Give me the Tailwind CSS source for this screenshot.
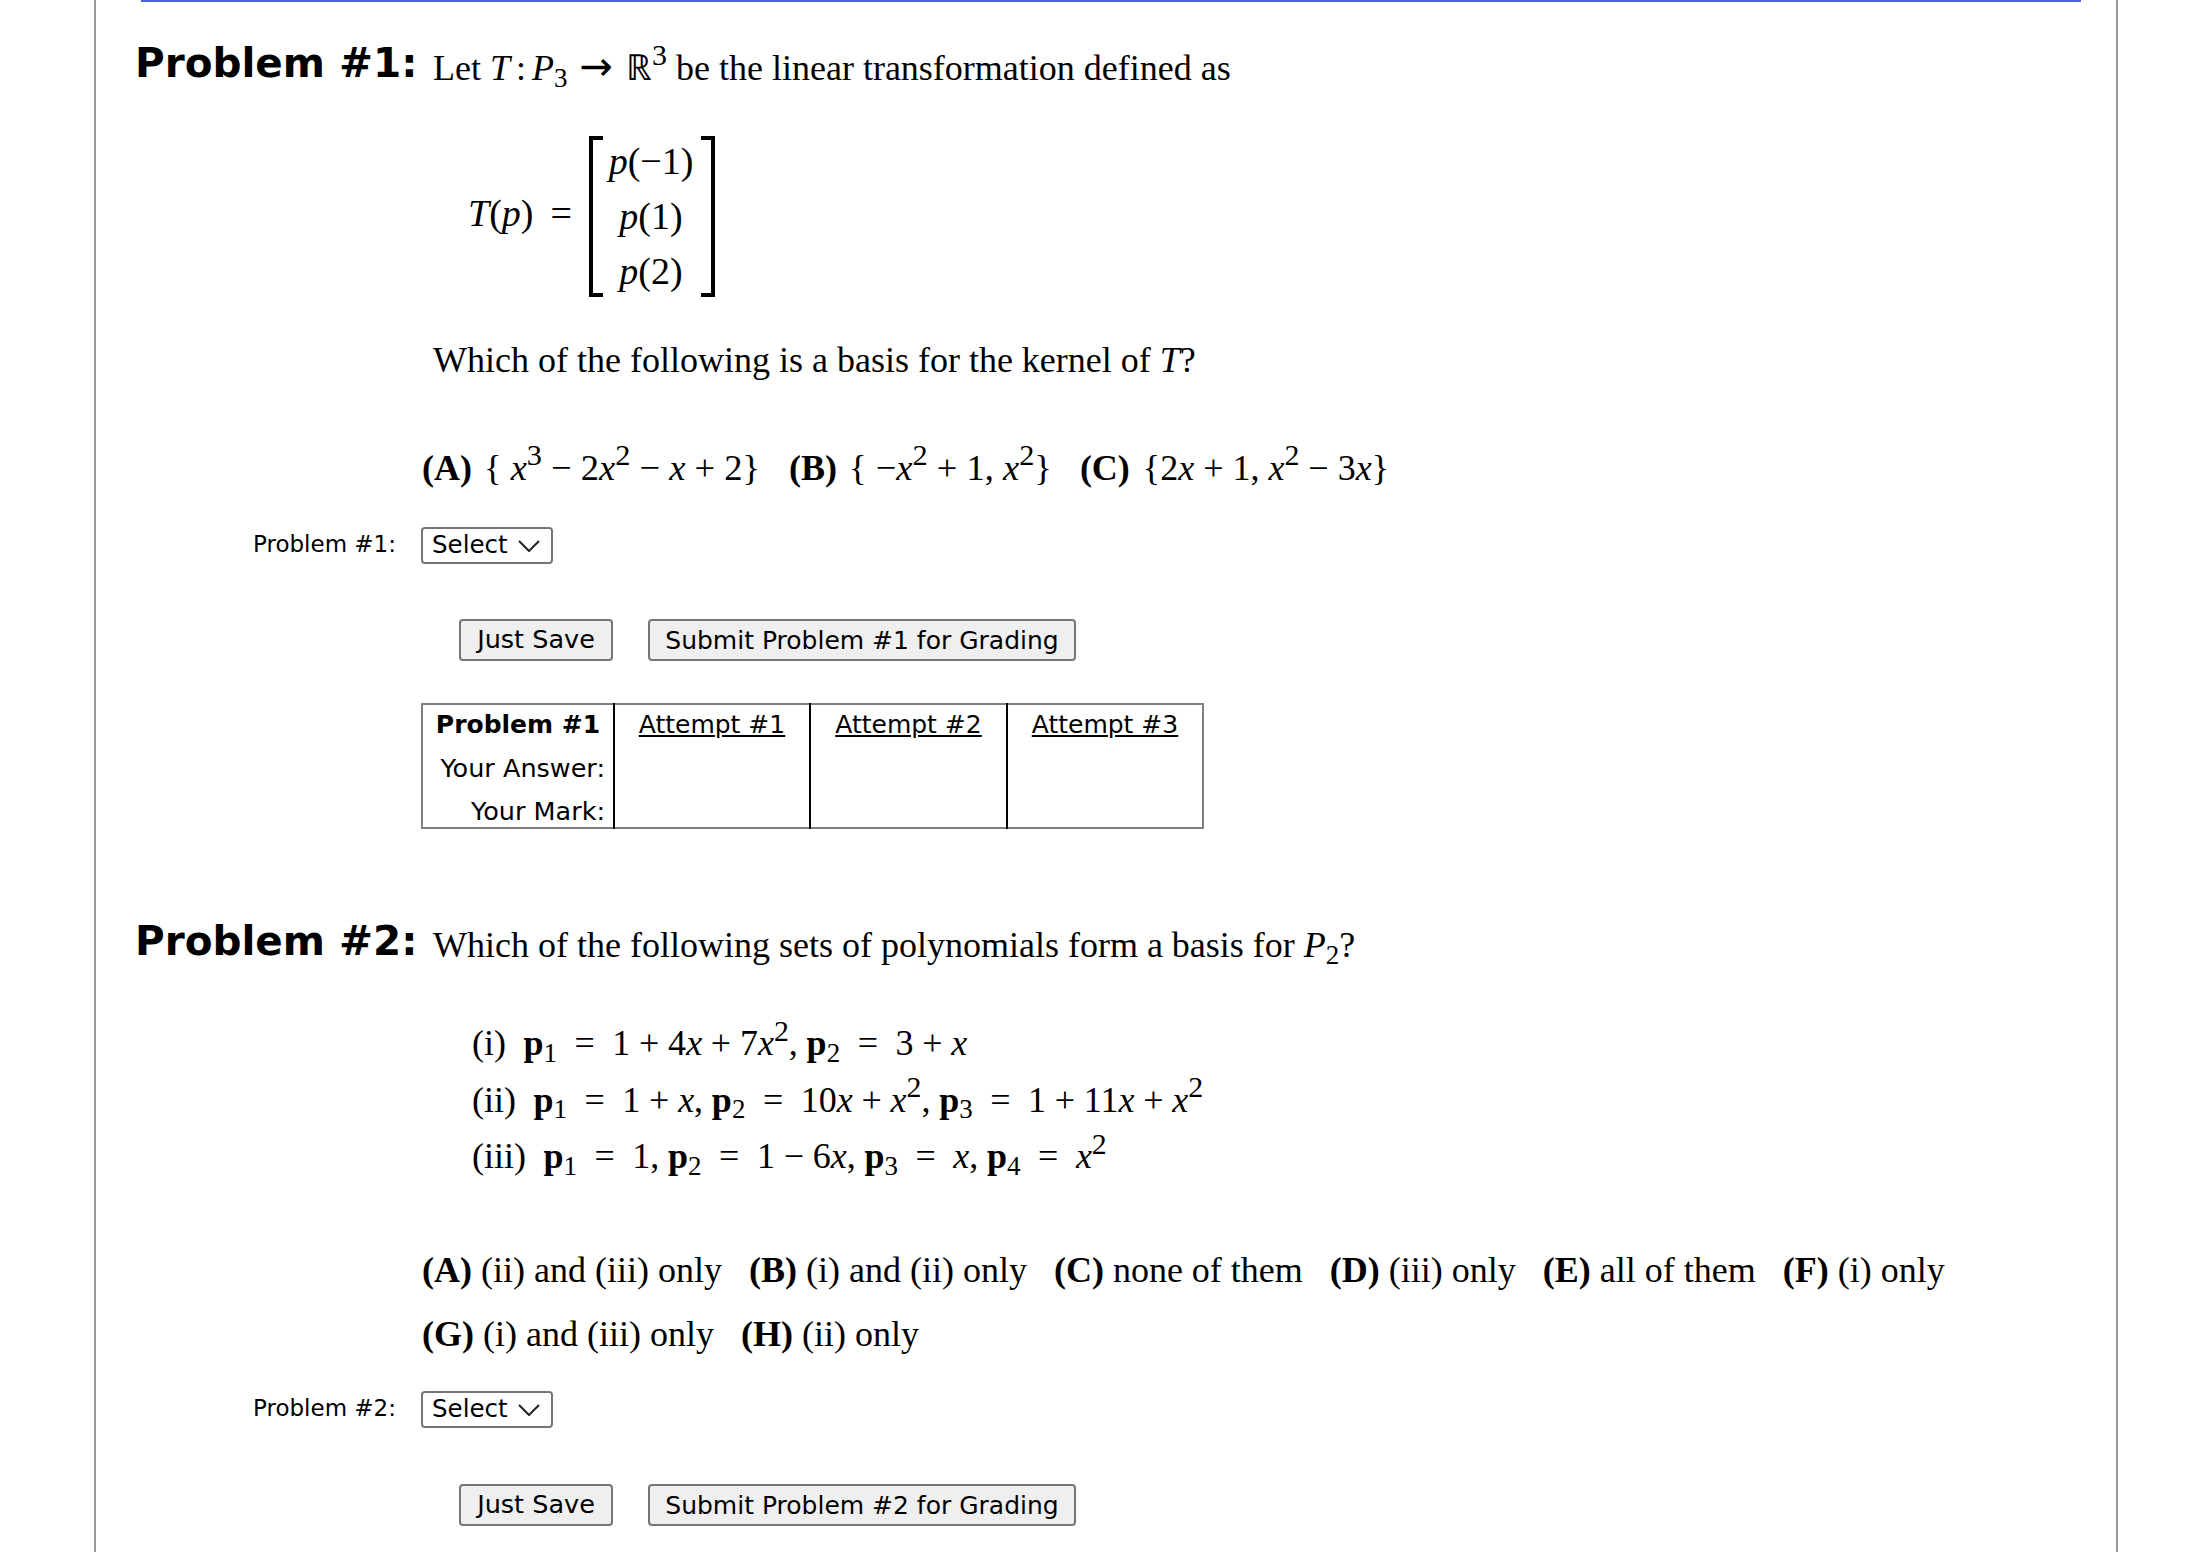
<!DOCTYPE html>
<html lang="en">
<head>
<meta charset="utf-8">
<title>Problems</title>
<script src="https://cdn.jsdelivr.net/npm/@tailwindcss/browser@4"></script>
</head>
<body class="bg-white text-black font-['DejaVu_Sans',sans-serif]">
<div class="h-[1552px] overflow-hidden">
  <main class="ml-[94px] w-[2024px] h-full border-x-2 border-[#999999]">
    <div class="ml-[45px] w-[1940px] h-[2px] bg-[#4a63d8]"></div>
    <div class="pl-[39px]">

      <section class="mt-[37px] h-[48px] flex items-baseline">
        <h2 class="w-[298px] text-[40.5px] font-bold leading-[48px] whitespace-nowrap">Problem #1:</h2>
        <p class="relative top-[3px] font-['Liberation_Serif',serif] text-[36px] leading-[48px] whitespace-nowrap">Let <i>T</i><span class="mx-[6px]">:</span><i>P</i><sub>3</sub> <span class="ml-[3px] mr-[4px] font-['DejaVu_Sans',sans-serif] text-[40px]">→</span> ℝ<sup class="top-[-0.5em] text-[0.83em]">3</sup> be the linear transformation defined as</p>
      </section>

      <div class="mt-[49px] h-[161px] ml-[333px] flex items-center font-['Liberation_Serif',serif] text-[38px]">
        <span class="w-[82px] whitespace-nowrap relative top-[-3px] [word-spacing:-1px]"><i>T</i>(<i>p</i>) &nbsp;=</span>
        <div class="ml-[39px] w-[126px] h-[161px] pr-[2px] relative flex flex-col items-center justify-center">
          <span class="absolute left-0 top-0 h-full w-[14px] border-l-[4px] border-y-[4px] border-black"></span>
          <span class="absolute right-0 top-0 h-full w-[14px] border-r-[4px] border-y-[4px] border-black"></span>
          <span class="h-[55px] leading-[55px]"><i>p</i>(−1)</span>
          <span class="h-[55px] leading-[55px]"><i>p</i>(1)</span>
          <span class="h-[55px] leading-[55px]"><i>p</i>(2)</span>
        </div>
      </div>

      <p class="mt-[43px] ml-[298px] h-[40px] font-['Liberation_Serif',serif] text-[36px] leading-[40px] whitespace-nowrap">Which of the following is a basis for the kernel of <i>T</i>?</p>

      <p class="mt-[63px] ml-[287px] h-[50px] font-['Liberation_Serif',serif] text-[36px] leading-[50px] whitespace-nowrap"><b>(A)</b> <span class="ml-[3px] text-[36.5px]">{ <i>x</i><sup class="top-[-0.5em] text-[0.83em]">3</sup> − 2<i>x</i><sup class="top-[-0.5em] text-[0.83em]">2</sup> − <i>x</i> + 2}</span><b class="ml-[29px]">(B)</b> <span class="ml-[3px] text-[36.5px]">{ −<i>x</i><sup class="top-[-0.5em] text-[0.83em]">2</sup> + 1, <i>x</i><sup class="top-[-0.5em] text-[0.83em]">2</sup>}</span><b class="ml-[28px]">(C)</b> <span class="ml-[4px]">{2<i>x</i> + 1, <i>x</i><sup class="top-[-0.5em] text-[0.83em]">2</sup> − 3<i>x</i>}</span></p>

      <div class="mt-[34px] h-[37px] flex items-center">
        <label class="w-[286px] pl-[118px] text-[23px] whitespace-nowrap relative top-[-1px]">Problem #1:</label>
        <span class="relative w-[132px] h-[37px] block">
          <select class="appearance-none w-full h-full pl-[9px] border-2 border-[#767676] rounded-[4px] bg-white text-[24.5px] leading-none"><option>Select</option></select>
          <svg class="absolute right-[13px] top-[13px] w-[22px] h-[12px] pointer-events-none" viewBox="0 0 22 12" fill="none" stroke="#222222" stroke-width="2"><path d="M1 1l10 10L21 1"/></svg>
        </span>
      </div>

      <div class="mt-[55px] h-[41px] flex gap-[35px] ml-[324px]">
        <button class="w-[154px] h-[42px] bg-[#efefef] border-2 border-[#767676] rounded-[4px] text-[25.5px] leading-none">Just Save</button>
        <button class="w-[428px] h-[42px] bg-[#efefef] border-2 border-[#767676] rounded-[4px] text-[25px] leading-none whitespace-nowrap">Submit Problem #1 for Grading</button>
      </div>

      <table class="mt-[43px] ml-[286px] w-[781px] h-[123px] border-2 border-[#808080] border-collapse text-[25px] table-fixed">
        <colgroup><col class="w-[192px]"><col class="w-[196px]"><col class="w-[197px]"><col class="w-[196px]"></colgroup>
        <tbody>
          <tr class="h-[43.5px]">
            <th class="border-r-2 border-black font-bold text-center align-top leading-[40px] px-0 whitespace-nowrap">Problem #1</th>
            <td class="border-r-2 border-black text-center align-top leading-[40px] underline">Attempt #1</td>
            <td class="border-r-2 border-black text-center align-top leading-[40px] underline">Attempt #2</td>
            <td class="text-center align-top leading-[40px] underline">Attempt #3</td>
          </tr>
          <tr class="h-[43.5px]">
            <td class="border-r-2 border-black text-right align-top text-[25.5px] leading-[40px] pr-[8px] whitespace-nowrap">Your Answer:</td>
            <td class="border-r-2 border-black"></td><td class="border-r-2 border-black"></td><td></td>
          </tr>
          <tr class="h-[36px]">
            <td class="border-r-2 border-black text-right align-top text-[25.5px] pt-[4px] leading-[32px] pr-[8px] whitespace-nowrap">Your Mark:</td>
            <td class="border-r-2 border-black"></td><td class="border-r-2 border-black"></td><td></td>
          </tr>
        </tbody>
      </table>

      <section class="mt-[88px] h-[48px] flex items-baseline">
        <h2 class="w-[298px] text-[40.5px] font-bold leading-[48px] whitespace-nowrap">Problem #2:</h2>
        <p class="relative top-[2px] font-['Liberation_Serif',serif] text-[36px] leading-[48px] whitespace-nowrap">Which of the following sets of polynomials form a basis for <i>P</i><sub>2</sub>?</p>
      </section>

      <div class="mt-[50px] ml-[337px] font-['Liberation_Serif',serif] text-[36px] whitespace-nowrap [word-spacing:-0.25px]">
        <p class="h-[56.5px] leading-[56.5px]">(i) &nbsp;<b>p</b><sub>1</sub> &nbsp;= &nbsp;1 + 4<i>x</i> + 7<i>x</i><sup class="top-[-0.47em] text-[0.83em]">2</sup>, <b>p</b><sub>2</sub> &nbsp;= &nbsp;3 + <i>x</i></p>
        <p class="h-[56.5px] leading-[56.5px]">(ii) &nbsp;<b>p</b><sub>1</sub> &nbsp;= &nbsp;1 + <i>x</i>, <b>p</b><sub>2</sub> &nbsp;= &nbsp;10<i>x</i> + <i>x</i><sup class="top-[-0.47em] text-[0.83em]">2</sup>, <b>p</b><sub>3</sub> &nbsp;= &nbsp;1 + 11<i>x</i> + <i>x</i><sup class="top-[-0.47em] text-[0.83em]">2</sup></p>
        <p class="h-[56.5px] leading-[56.5px]">(iii) &nbsp;<b>p</b><sub>1</sub> &nbsp;= &nbsp;1, <b>p</b><sub>2</sub> &nbsp;= &nbsp;1 − 6<i>x</i>, <b>p</b><sub>3</sub> &nbsp;= &nbsp;<i>x</i>, <b>p</b><sub>4</sub> &nbsp;= &nbsp;<i>x</i><sup class="top-[-0.47em] text-[0.83em]">2</sup></p>
      </div>

      <div class="mt-[53.5px] ml-[287px] font-['Liberation_Serif',serif] text-[36px] whitespace-nowrap">
        <p class="h-[64px] leading-[64px]"><b>(A)</b> (ii) and (iii) only &nbsp;&nbsp;<b>(B)</b> (i) and (ii) only &nbsp;&nbsp;<b>(C)</b> none of them &nbsp;&nbsp;<b>(D)</b> (iii) only &nbsp;&nbsp;<b>(E)</b> all of them &nbsp;&nbsp;<b>(F)</b> (i) only</p>
        <p class="h-[64px] leading-[64px]"><b>(G)</b> (i) and (iii) only &nbsp;&nbsp;<b>(H)</b> (ii) only</p>
      </div>

      <div class="mt-[25px] h-[37px] flex items-center">
        <label class="w-[286px] pl-[118px] text-[23px] whitespace-nowrap relative top-[-1px]">Problem #2:</label>
        <span class="relative w-[132px] h-[37px] block">
          <select class="appearance-none w-full h-full pl-[9px] border-2 border-[#767676] rounded-[4px] bg-white text-[24.5px] leading-none"><option>Select</option></select>
          <svg class="absolute right-[13px] top-[13px] w-[22px] h-[12px] pointer-events-none" viewBox="0 0 22 12" fill="none" stroke="#222222" stroke-width="2"><path d="M1 1l10 10L21 1"/></svg>
        </span>
      </div>

      <div class="mt-[56px] h-[41px] flex gap-[35px] ml-[324px]">
        <button class="w-[154px] h-[42px] bg-[#efefef] border-2 border-[#767676] rounded-[4px] text-[25.5px] leading-none">Just Save</button>
        <button class="w-[428px] h-[42px] bg-[#efefef] border-2 border-[#767676] rounded-[4px] text-[25px] leading-none whitespace-nowrap">Submit Problem #2 for Grading</button>
      </div>
    </div>
  </main>
</div>
</body>
</html>
